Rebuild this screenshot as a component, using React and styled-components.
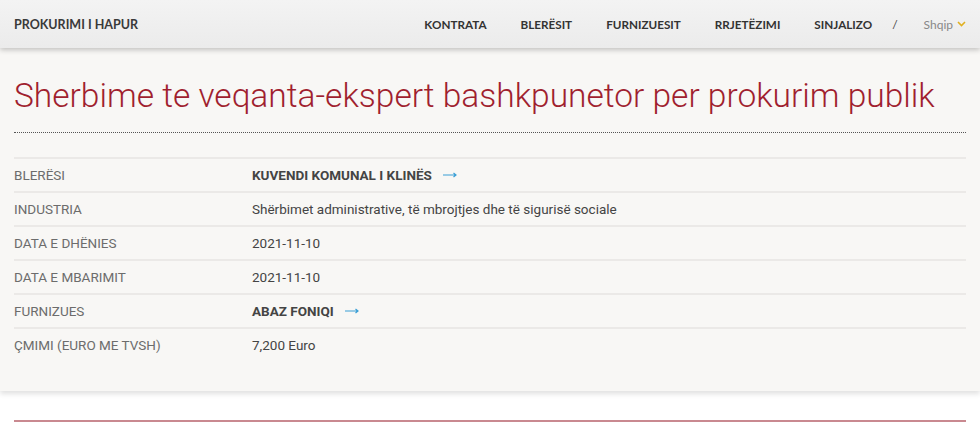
import React from 'react'
import styled, { createGlobalStyle } from 'styled-components'

const Global = createGlobalStyle`
  html, body { margin: 0; padding: 0; background: #fff; }
  body { font-family: Roboto, "Liberation Sans", sans-serif; }
`

const Header = styled.header`
  height: 48px;
  display: flex;
  align-items: center;
  justify-content: space-between;
  padding: 0 14px;
  background: linear-gradient(#f3f3f3, #ebebeb);
  box-shadow: 0 2px 5px rgba(0, 0, 0, 0.22);
  position: relative;
  z-index: 2;
  font-family: Lato, "Liberation Sans", sans-serif;
`

const Brand = styled.div`
  font-size: 12.5px;
  font-weight: 700;
  color: #3a3a3a;
`

const Nav = styled.nav`
  display: flex;
  align-items: center;
  gap: 34px;
`

const NavLink = styled.a`
  font-size: 11.7px;
  font-weight: 700;
  color: #333;
  text-decoration: none;
`

const Slash = styled.span`
  font-size: 12px;
  color: #444;
  margin-left: -14px;
`

const Lang = styled.span`
  display: flex;
  align-items: center;
  gap: 4px;
  font-size: 12px;
  color: #888;
  margin-left: -8px;
`

const Panel = styled.main`
  background: #f8f7f5;
  padding: 28px 14px 30px;
  box-shadow: 0 3px 5px rgba(0, 0, 0, 0.12);
  position: relative;
  z-index: 1;
`

const Title = styled.h1`
  margin: 0;
  font-weight: 300;
  font-size: 33.5px;
  line-height: 40px;
  color: #a01f2f;
  white-space: nowrap;
  padding-bottom: 16px;
  border-bottom: 1px dotted #555;
`

const Table = styled.div`
  margin-top: 24px;
  border-top: 2px solid #ebe9e7;
`

const Row = styled.div`
  display: grid;
  grid-template-columns: 238px 1fr;
  align-items: center;
  height: 32px;
  border-bottom: ${p => (p.last ? 'none' : '2px solid #ebe9e7')};
  font-size: 13.5px;
`

const Label = styled.div`
  color: #6c6c6c;
  text-transform: uppercase;
`

const Value = styled.div`
  color: #444;
  font-weight: ${p => (p.bold ? 700 : 400)};
  display: flex;
  align-items: center;
  gap: 11px;
`

const Rule = styled.div`
  margin: 29px 14px 0;
  height: 2px;
  background: #c98990;
`

const Arrow = () => (
  <svg width="14" height="6" viewBox="0 0 14 6">
    <path d="M0 3h13M10.5 1l2.5 2-2.5 2" fill="none" stroke="#3a9fd6" strokeWidth="1.2" />
  </svg>
)

const rows = [
  { label: 'Blerësi', value: 'KUVENDI KOMUNAL I KLINËS', link: true },
  { label: 'Industria', value: 'Shërbimet administrative, të mbrojtjes dhe të sigurisë sociale' },
  { label: 'Data e dhënies', value: '2021-11-10' },
  { label: 'Data e mbarimit', value: '2021-11-10' },
  { label: 'Furnizues', value: 'ABAZ FONIQI', link: true },
  { label: 'Çmimi (Euro me TVSH)', value: '7,200 Euro' },
]

export default function App() {
  return (
    <>
      <Global />
      <Header>
        <Brand>PROKURIMI I HAPUR</Brand>
        <Nav>
          <NavLink href="#">KONTRATA</NavLink>
          <NavLink href="#">BLERËSIT</NavLink>
          <NavLink href="#">FURNIZUESIT</NavLink>
          <NavLink href="#">RRJETËZIMI</NavLink>
          <NavLink href="#">SINJALIZO</NavLink>
          <Slash>/</Slash>
          <Lang>
            Shqip
            <svg width="9" height="6" viewBox="0 0 9 6">
              <path d="M1 1l3.5 3.5L8 1" fill="none" stroke="#e0b020" strokeWidth="1.6" />
            </svg>
          </Lang>
        </Nav>
      </Header>
      <Panel>
        <Title>Sherbime te veqanta-ekspert bashkpunetor per prokurim publik</Title>
        <Table>
          {rows.map((r, i) => (
            <Row key={r.label} last={i === rows.length - 1}>
              <Label>{r.label}</Label>
              <Value bold={r.link}>
                {r.value}
                {r.link && <Arrow />}
              </Value>
            </Row>
          ))}
        </Table>
      </Panel>
      <Rule />
    </>
  )
}
